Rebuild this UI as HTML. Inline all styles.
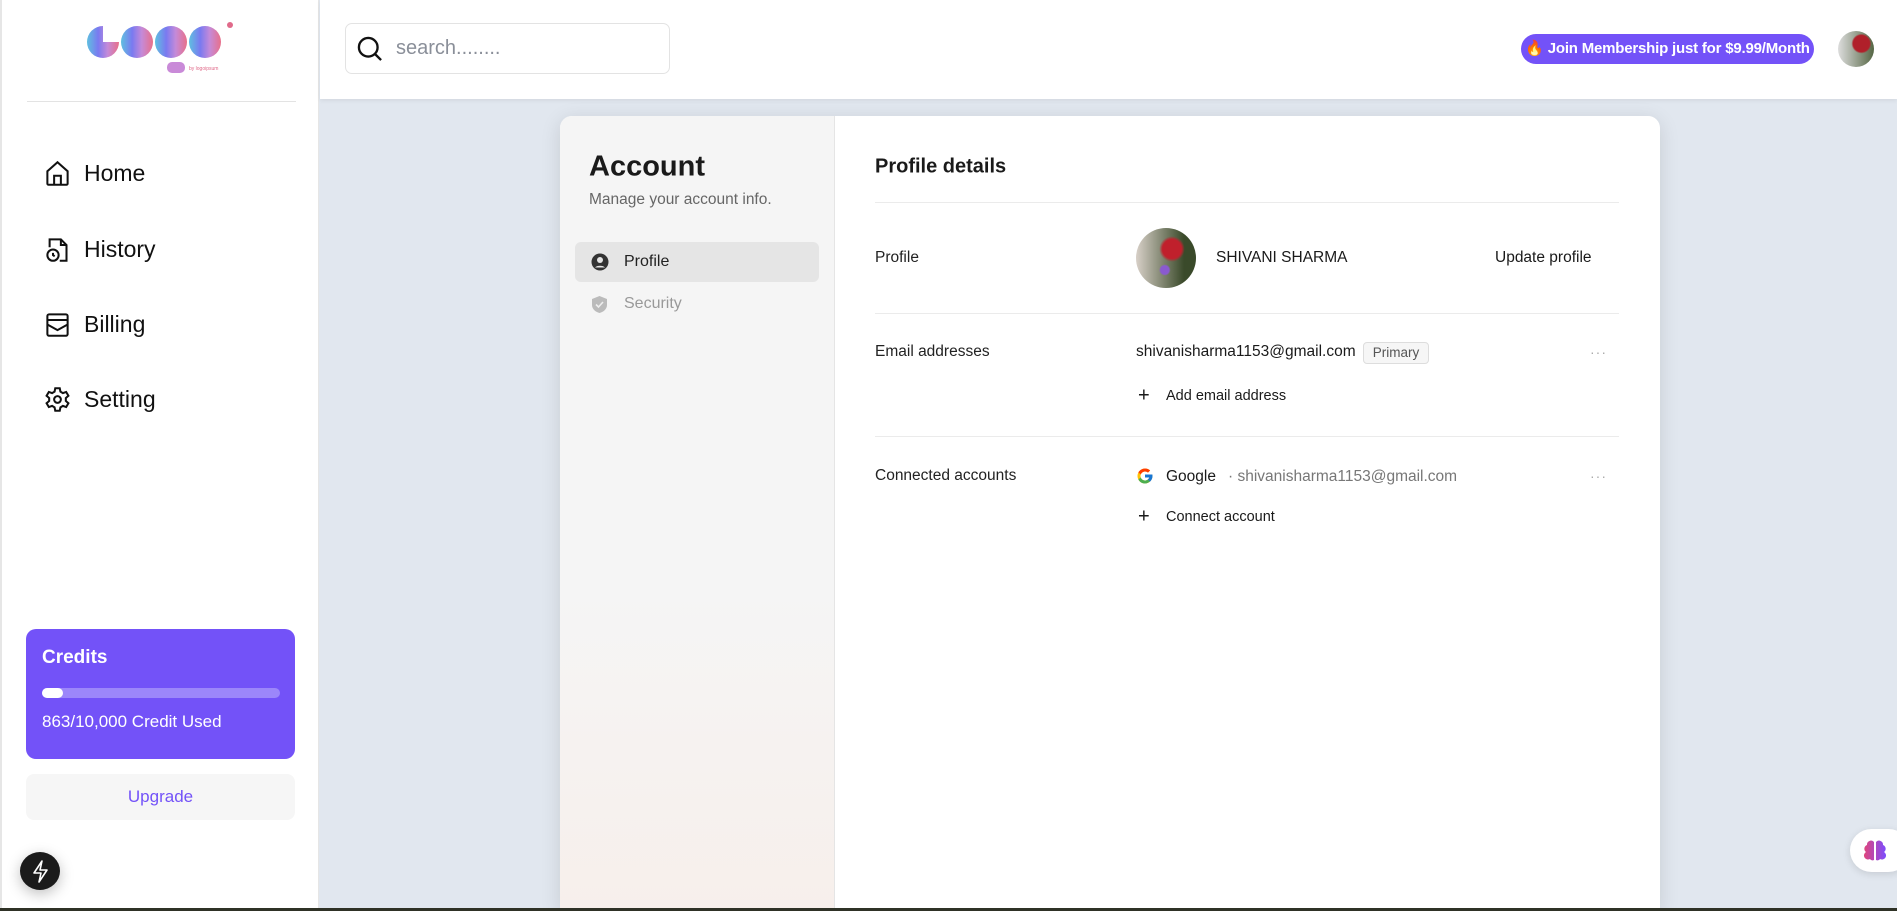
<!DOCTYPE html>
<html style="height:911px;overflow:hidden"><head><meta charset="utf-8"><style>
*{box-sizing:border-box;margin:0;padding:0}
body{width:1897px;height:911px;overflow:hidden;font-family:"Liberation Sans",sans-serif;background:#e1e7ef;position:relative;color:#1a1a1a}
.abs{position:absolute}
.side{left:0;top:0;width:319px;height:911px;background:#fff;border-right:1px solid #e6e6e6;border-left:2px solid #e6e6e6}
.nav{position:absolute;left:42px;display:flex;align-items:center;font-size:23px;color:#111}
.nav svg{width:27px;height:27px;margin-right:13px}
.hdr{left:320px;top:0;right:0;height:99px;background:#fff;box-shadow:0 2px 4px rgba(0,0,0,.06)}
.lbl{position:absolute;left:875px;font-size:15.5px;color:#222;transform:translateY(-50%)}
.t{position:absolute;transform:translateY(-50%);white-space:nowrap}
.hr{position:absolute;left:875px;width:744px;height:1px;background:#ebebeb}
</style></head><body>
<div class="abs side">
 <svg class="abs" style="left:83px;top:20px" width="150" height="55" viewBox="0 0 150 55">
  <defs><linearGradient id="g" x1="0" x2="1"><stop offset="0" stop-color="#5fc0e0"/><stop offset=".35" stop-color="#7a7af0"/><stop offset=".65" stop-color="#c58ad8"/><stop offset="1" stop-color="#e8708a"/></linearGradient></defs>
  <path d="M2 22 A16 16 0 0 0 34 22 L18 22 L18 6 A16 16 0 0 0 2 22Z" fill="url(#g)"/>
  <circle cx="52" cy="22" r="16" fill="url(#g)"/><circle cx="86" cy="22" r="16" fill="url(#g)"/><circle cx="120" cy="22" r="16" fill="url(#g)"/>
  <circle cx="145" cy="5" r="3" fill="#e06a8a"/>
  <rect x="82" y="42" width="18" height="11" rx="5" fill="#c98ad8"/>
  <text x="104" y="50" font-size="5" fill="#e06a8a">by logoipsum</text>
 </svg>
 <div class="abs" style="left:25px;top:101px;width:269px;height:1px;background:#e3e3e3"></div>
 <div class="nav" style="top:160px"><svg viewBox="0 0 24 24" fill="none" stroke="#111" stroke-width="1.8"><path d="M3 10 12 2l9 8v11a1 1 0 0 1-1 1H4a1 1 0 0 1-1-1z"/><path d="M9 22v-8h6v8"/></svg>Home</div>
 <div class="nav" style="top:236px"><svg viewBox="0 0 24 24" fill="none" stroke="#111" stroke-width="1.8"><path d="M5 10V3h10l5 5v14h-6"/><path d="M15 3v5h5"/><circle cx="8" cy="17" r="5"/><path d="M8 15v2l1.5 1"/></svg>History</div>
 <div class="nav" style="top:311px"><svg viewBox="0 0 24 24" fill="none" stroke="#111" stroke-width="1.8"><rect x="3" y="3" width="18" height="19" rx="1.5"/><path d="M3 8h18M3 12l9 5 9-5"/></svg>Billing</div>
 <div class="nav" style="top:386px"><svg viewBox="0 0 24 24" fill="none" stroke="#111" stroke-width="1.8"><circle cx="12" cy="12" r="3"/><path d="M10 2h4l.6 3 2.2 1.3 2.9-1 2 3.4-2.3 2v2.6l2.3 2-2 3.4-2.9-1-2.2 1.3-.6 3h-4l-.6-3-2.2-1.3-2.9 1-2-3.4 2.3-2v-2.6l-2.3-2 2-3.4 2.9 1L9.4 5z"/></svg>Setting</div>
 <div class="abs" style="left:24px;top:629px;width:269px;height:130px;background:#7352f8;border-radius:10px;color:#fff">
  <div class="abs" style="left:16px;top:18px;font-size:19px;font-weight:bold">Credits</div>
  <div class="abs" style="left:16px;top:59px;width:238px;height:10px;border-radius:5px;background:#9c86fa"><div style="width:21px;height:10px;border-radius:5px;background:#fff"></div></div>
  <div class="abs" style="left:16px;top:83px;font-size:17px">863/10,000 Credit Used</div>
 </div>
 <div class="abs" style="left:24px;top:774px;width:269px;height:46px;background:#f6f6f6;border-radius:8px;color:#7352f8;font-size:17px;text-align:center;line-height:46px">Upgrade</div>
 <div class="abs" style="left:18px;top:852px;width:40px;height:38px;border-radius:50%;background:#1b1b1b;box-shadow:0 4px 14px rgba(0,0,0,.25)"><svg width="40" height="38" viewBox="0 0 40 38"><path d="M22 9 14 21h7l-2 9 8-12h-7z" fill="none" stroke="#fff" stroke-width="1.6" stroke-linejoin="round"/></svg></div>
</div>
<div class="abs hdr">
 <div class="abs" style="left:25px;top:23px;width:325px;height:51px;border:1px solid #e3e3e3;border-radius:7px">
  <svg class="abs" style="left:10px;top:11px" width="28" height="28" viewBox="0 0 24 24" fill="none" stroke="#111" stroke-width="2"><circle cx="10.5" cy="10.5" r="8"/><path d="m16.5 16.5 5 5"/></svg>
  <div class="abs" style="left:50px;top:13px;font-size:20px;color:#8a8f99">search........</div>
 </div>
 <div class="abs" style="left:1201px;top:34px;width:293px;height:30px;border-radius:15px;background:#7352f8;color:#fff;font-size:15px;font-weight:bold;line-height:30px;white-space:nowrap;text-align:center;letter-spacing:-0.2px">🔥 Join Membership just for $9.99/Month</div>
 <div class="abs" style="left:1518px;top:31px;width:36px;height:36px;border-radius:50%;background:radial-gradient(circle at 65% 35%,#b0202a 0 25%,transparent 30%),linear-gradient(90deg,#ddd,#556644)"></div>
</div>
<div class="abs" style="left:560px;top:116px;width:1100px;height:795px;border-radius:12px 12px 0 0;background:#fff;box-shadow:0 4px 20px rgba(0,0,0,.12);overflow:hidden">
 <div class="abs" style="left:0;top:0;width:275px;height:795px;background:linear-gradient(#f5f5f5 0 60%,#f7efeb);border-right:1px solid #e5e5e5"></div>
</div>
<div class="t" style="left:589px;top:167px;font-size:29px;font-weight:bold">Account</div>
<div class="t" style="left:589px;top:200px;font-size:15.5px;color:#666">Manage your account info.</div>
<div class="abs" style="left:575px;top:242px;width:244px;height:40px;background:#e5e5e5;border-radius:6px"></div>
<svg class="abs" style="left:591px;top:253px" width="18" height="18" viewBox="0 0 18 18"><circle cx="9" cy="9" r="8.5" fill="#333"/><circle cx="9" cy="7" r="3" fill="#e5e5e5"/><path d="M4 14.5a6 4 0 0 1 10 0" fill="#e5e5e5"/></svg>
<div class="t" style="left:624px;top:262px;font-size:16px;color:#222">Profile</div>
<svg class="abs" style="left:591px;top:295px" width="17" height="19" viewBox="0 0 17 19"><path d="M8.5 1 16 4v6c0 4-3.5 7-7.5 8C4.5 17 1 14 1 10V4z" fill="#bbb"/><path d="m5 9.5 2.5 2.5 4.5-5" stroke="#eee" stroke-width="1.6" fill="none"/></svg>
<div class="t" style="left:624px;top:304px;font-size:16px;color:#999">Security</div>
<div class="t" style="left:875px;top:167px;font-size:20px;font-weight:bold">Profile details</div>
<div class="hr" style="top:202px"></div>
<div class="lbl" style="top:258px">Profile</div>
<div class="abs" style="left:1136px;top:228px;width:60px;height:60px;border-radius:50%;background:radial-gradient(circle at 60% 35%,#c0202c 0 18%,transparent 24%),radial-gradient(circle at 48% 70%,#8a5ad0 0 8%,transparent 11%),linear-gradient(90deg,#d8d0c8,#3a4a2a 80%)"></div>
<div class="t" style="left:1216px;top:258px;font-size:15.5px">SHIVANI SHARMA</div>
<div class="t" style="left:1495px;top:258px;font-size:15.5px">Update profile</div>
<div class="hr" style="top:313px"></div>
<div class="lbl" style="top:352px">Email addresses</div>
<div class="t" style="left:1136px;top:352px;font-size:15.5px">shivanisharma1153@gmail.com</div>
<div class="abs" style="left:1363px;top:342px;width:66px;height:22px;border:1px solid #ddd;border-radius:4px;background:#f6f6f6;font-size:13.5px;color:#555;text-align:center;line-height:20px">Primary</div>
<div class="t" style="left:1590px;top:352px;font-size:14px;color:#aaa;letter-spacing:1px">···</div>
<div class="t" style="left:1138px;top:396px;font-size:20px">+</div>
<div class="t" style="left:1166px;top:396px;font-size:14.5px">Add email address</div>
<div class="hr" style="top:436px"></div>
<div class="lbl" style="top:476px">Connected accounts</div>
<svg class="abs" style="left:1136px;top:467px" width="18" height="18" viewBox="0 0 48 48"><path fill="#FFC107" d="M43.6 20H24v8h11.3C33.7 32.7 29.2 36 24 36c-6.6 0-12-5.4-12-12s5.4-12 12-12c3 0 5.8 1.1 7.9 3l5.7-5.7C34 6 29.3 4 24 4 13 4 4 13 4 24s9 20 20 20 20-9 20-20c0-1.3-.1-2.7-.4-4z"/><path fill="#FF3D00" d="m6.3 14.7 6.6 4.8C14.7 15.1 19 12 24 12c3 0 5.8 1.1 7.9 3l5.7-5.7C34 6 29.3 4 24 4 16.3 4 9.7 8.3 6.3 14.7z"/><path fill="#4CAF50" d="M24 44c5.2 0 9.9-2 13.4-5.2l-6.2-5.2C29.200 35.1 26.7 36 24 36c-5.2 0-9.6-3.3-11.3-8l-6.5 5C9.5 39.6 16.2 44 24 44z"/><path fill="#1976D2" d="M43.6 20H24v8h11.3c-.8 2.2-2.2 4.2-4.1 5.6l6.2 5.2C37 39.2 44 34 44 24c0-1.3-.1-2.7-.4-4z"/></svg>
<div class="t" style="left:1166px;top:477px;font-size:15.5px">Google</div>
<div class="t" style="left:1228px;top:477px;font-size:15.5px;color:#777">· shivanisharma1153@gmail.com</div>
<div class="t" style="left:1590px;top:476px;font-size:14px;color:#aaa;letter-spacing:1px">···</div>
<div class="t" style="left:1138px;top:517px;font-size:20px">+</div>
<div class="t" style="left:1166px;top:517px;font-size:14.5px">Connect account</div>
<div class="abs" style="left:1850px;top:829px;width:60px;height:43px;border-radius:22px;background:#fff;box-shadow:0 2px 8px rgba(0,0,0,.12)"><svg class="abs" style="left:13px;top:10px" width="24" height="24" viewBox="0 0 24 24"><defs><linearGradient id="b" x1="0" x2="1"><stop offset="0" stop-color="#e0457b"/><stop offset="1" stop-color="#7c4dff"/></linearGradient></defs><path d="M11 3a4 4 0 0 0-7 3 4 4 0 0 0-1 7 4 4 0 0 0 4 7 3 3 0 0 0 4 1zM13 3a4 4 0 0 1 7 3 4 4 0 0 1 1 7 4 4 0 0 1-4 7 3 3 0 0 1-4 1z" fill="url(#b)"/></svg></div>
<div class="abs" style="left:0;top:908px;width:1897px;height:3px;background:#2f3226"></div>
</body></html>
